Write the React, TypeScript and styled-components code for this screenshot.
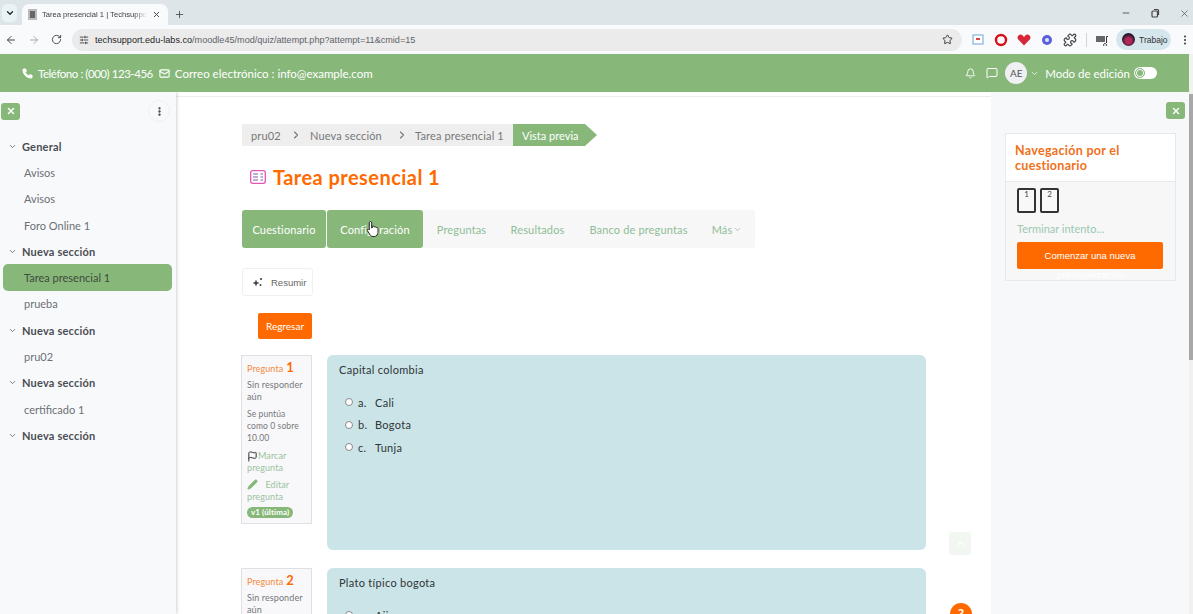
import React from "react";
import styled, { createGlobalStyle } from "styled-components";
import {
  ArrowLeft, ArrowRight, Bell, ChevronDown, ChevronRight, ChevronUp, EllipsisVertical, Flag, Mail,
  MessageSquare, Minus, Pencil, Phone, Plus, Puzzle, RotateCw, SlidersHorizontal, Star, X,
} from "lucide-react";

const FONT = `"Lato", "Open Sans", "Liberation Sans", sans-serif`;

const Global = createGlobalStyle`
  html, body { margin: 0; padding: 0; height: 100%; overflow: hidden; background: #fff; }
  body { font-family: ${FONT}; }
  #root { height: 100%; }
  * { box-sizing: border-box; }
`;

const Page = styled.div`display: flex; flex-direction: column; height: 614px; width: 1193px; overflow: hidden;`;

/* browser chrome */
const TabStrip = styled.div`height: 25px; background: #dee5e8; display: flex; align-items: flex-end; padding-left: 2px; position: relative; flex: none;`;
const TabMenu = styled.div`width: 15px; height: 18px; margin-bottom: 3px; border-radius: 5px; background: #e9f3f6; display: flex; align-items: center; justify-content: center; color: #222;`;
const Tab = styled.div`margin-left: 5px; width: 146px; height: 21px; background: #f9fafb; border-radius: 7px 7px 0 0; display: flex; align-items: center; padding-left: 6px; gap: 5px; color: #3c4043; font: 7.6px "Liberation Sans", sans-serif;`;
const Favicon = styled.svg`width: 9px; height: 11px; flex: none;`;
const TabTitle = styled.span`width: 105px; white-space: nowrap; overflow: hidden; flex: none; -webkit-mask-image: linear-gradient(90deg, #000 88%, transparent);`;
const TabAdd = styled.div`margin-left: 6px; margin-bottom: 5px; color: #333; display: flex;`;
const WinControls = styled.div`margin-left: auto; width: 72px; align-self: flex-start; padding: 8px 3px 0 0; display: flex; justify-content: space-between; color: #444;`;

const Toolbar = styled.div`height: 29px; background: #f9fafb; display: flex; align-items: center; padding-left: 5px; flex: none; color: #444;`;
const NavIcons = styled.div`display: flex; align-items: center; gap: 11px; width: 67px; flex: none;`;
const Omnibox = styled.div`width: 890px; flex: none; height: 22px; border-radius: 11px; background: #ebebeb; display: flex; align-items: center; padding: 0 9px 0 7px; gap: 6px; font: 9.1px "Liberation Sans", sans-serif; color: #5f6368;`;
const UrlHost = styled.span`color: #1f1f1f;`;
const Url = styled.span`flex: 1; white-space: nowrap;`;
const Exts = styled.div`display: flex; align-items: center; width: 133px; flex: none; padding-left: 9px; gap: 9px; & > * { flex: none; }`;
const ExtDivider = styled.div`width: 1px; height: 14px; background: #cdd8dc;`;
const MediaIcon = styled.svg`width: 14px; height: 12px; flex: none;`;
const Profile = styled.div`margin-left: 7px; width: 55px; height: 21px; border-radius: 11px; background: #d5e6ec; display: flex; align-items: center; padding-left: 6px; gap: 4px; font: 8.5px "Liberation Sans", sans-serif; color: #333; flex: none;`;
const ProfilePic = styled.div`width: 13px; height: 13px; border-radius: 50%; background: radial-gradient(circle at 50% 60%, #b0285a 0 30%, #2a1a2e 60%); flex: none;`;
const ToolDots = styled.div`margin-left: 8px; display: flex; color: #444; flex: none;`;

/* page */
const Viewport = styled.div`flex: 1; display: flex; min-height: 0;`;
const Site = styled.div`flex: 1; display: flex; flex-direction: column; min-width: 0;`;
const Scrollbar = styled.div`width: 4px; flex: none; background: #f1f1f1; display: flex; flex-direction: column;`;
const ScrollThumb = styled.div`height: 266px; margin-top: 40px; background: #a8a8a8; flex: none;`;

const TopBar = styled.header`height: 38px; flex: none; background: #87b87a; display: flex; align-items: center; padding-left: 22px; color: #fff; font-size: 11.5px; font-weight: 400;`;
const TopInfo = styled.span<{ $ls?: number }>`display: flex; align-items: center; margin-right: 6px; gap: 5px; white-space: nowrap; letter-spacing: ${(p) => p.$ls ?? 0}px;`;
const TopRight = styled.div`margin-left: auto; display: flex; align-items: center; padding-right: 32px;`;
const IconSlot = styled.span<{ $m: string }>`display: flex; margin: ${(p) => p.$m};`;
const Avatar = styled.div`width: 22px; height: 22px; border-radius: 50%; background: #eff0f3; color: #555; font-size: 10px; display: flex; align-items: center; justify-content: center;`;
const Toggle = styled.div`width: 23px; height: 12px; border-radius: 6px; background: #fff; margin-left: 4px; display: flex; align-items: center; padding-left: 1px;`;
const Knob = styled.div`width: 10px; height: 10px; border-radius: 50%; background: #87b87a; border: 1px solid #87b87a; box-shadow: inset 0 0 0 1px #fff;`;

const Main = styled.div`flex: 1; display: flex; min-height: 0; position: relative; overflow: hidden;`;

const LeftDrawer = styled.aside`width: 176px; flex: none; background: #f8f9fb; box-shadow: 1px 0 3px rgba(0,0,0,.18); padding: 8px 0 0 0; position: relative; z-index: 1;`;
const DrawerTop = styled.div`display: flex; justify-content: space-between; align-items: center; padding: 0 6px 0 1px; height: 22px; margin-bottom: 11px;`;
const CloseBtn = styled.div`width: 19px; height: 17px; border-radius: 3px; background: #87b87a; color: #fff; display: flex; align-items: center; justify-content: center;`;
const DotsBtn = styled.div`width: 22px; height: 22px; border-radius: 50%; border: 1px solid #f0f0f0; color: #333; display: flex; align-items: center; justify-content: center;`;
const Row = styled.div`height: 26.3px; display: flex; align-items: center;`;
const SectionRow = styled(Row)`padding-left: 8px; gap: 5px; font-weight: 700; font-size: 11px; letter-spacing: 0.2px; color: #4a4e54;`;
const ItemRow = styled(Row)<{ $active?: boolean }>`
  margin-left: 3px; width: 169px; padding-left: 21px; font-size: 11px; border-radius: 5px;
  color: ${(p) => (p.$active ? "#3f4a3d" : "#6c7075")};
  background: ${(p) => (p.$active ? "#87b87a" : "transparent")};
`;
const ChevronMuted = styled(ChevronDown)`color: #555; flex: none;`;

const Center = styled.main`flex: 1; min-width: 0; padding: 4px 0 0 0;`;
const CenterInner = styled.div`border-top: 1px solid #ececec; padding: 27px 0 0 66px;`;

const Crumbs = styled.nav`display: flex; height: 22px; align-items: center; font-size: 11px; letter-spacing: .15px; color: #777;`;
const CrumbItem = styled.span<{ $w: number; $pl: number }>`background: #eee; height: 100%; display: flex; align-items: center; width: ${(p) => p.$w}px; padding-left: ${(p) => p.$pl}px; white-space: nowrap; justify-content: space-between;`;
const CrumbLast = styled.span`background: #87b87a; color: #fff; height: 100%; width: 84px; padding-left: 9px; letter-spacing: 0; display: flex; align-items: center; clip-path: polygon(0 0, 72px 0, 84px 50%, 72px 100%, 0 100%);`;
const CrumbText = styled.span`margin-right: auto;`;

const TitleRow = styled.div`display: flex; align-items: center; margin: 19px 0 0 8px; height: 24px; gap: 7px;`;
const Title = styled.h1`margin: 0; font-size: 20px; font-weight: 700; letter-spacing: .45px; color: #ff6a00;`;

const Tabs = styled.nav`display: flex; width: 513px; height: 38px; margin-top: 21px; background: #f7f7f7; border-radius: 3px; font-size: 11px; letter-spacing: .15px;`;
const TabLink = styled.div<{ $active?: boolean; $w: number }>`
  width: ${(p) => p.$w}px; flex: none; display: flex; align-items: center; justify-content: center; gap: 1px; border-radius: 3px;
  color: ${(p) => (p.$active ? "#fff" : "#8fbd96")};
  background: ${(p) => (p.$active ? "#87b87a" : "transparent")};
  margin-right: ${(p) => (p.$active ? 1 : 0)}px;
`;
const Cursor = styled.svg`position: absolute; left: 366px; top: 128px; width: 14px; height: 18px; z-index: 3;`;

const ResumeBtn = styled.button`display: flex; align-items: center; gap: 7px; width: 71px; height: 28px; margin-top: 20px; padding: 0 0 0 9px; background: #fff; border: 1px solid #f0f0f0; border-radius: 3px; color: #666; font: 9.5px "Liberation Sans", sans-serif;`;
const BackBtn = styled.button`display: block; width: 54px; height: 26px; margin: 17px 0 0 16px; padding: 0; background: #ff6a00; border: none; border-radius: 2px; color: #fff; font: 10px ${FONT};`;

const Question = styled.section<{ $mt: number }>`display: grid; grid-template-columns: 71px 599px; column-gap: 15px; margin: ${(p) => p.$mt}px 0 0 -1px; align-items: start;`;
const Info = styled.div<{ $h: number }>`height: ${(p) => p.$h}px; background: #f8f8fb; border: 1px solid #dde1e4; padding: 4px 5px 0 5px; font-size: 9px; line-height: 12px; color: #777; letter-spacing: .1px;`;
const QNo = styled.div`color: #f58a3c; font-size: 9px; display: flex; align-items: baseline; gap: 3px; margin-bottom: 4px;`;
const QNum = styled.b`color: #ff6a00; font-size: 13px; line-height: 14px;`;
const InfoText = styled.div`margin-bottom: 5px;`;
const Grade = styled.div`font-size: 8.5px; margin-bottom: 6px;`;
const InfoLink = styled.div<{ $mb: number }>`color: #9cc2a0; margin-bottom: ${(p) => p.$mb}px;`;
const FlagIcon = styled(Flag)`vertical-align: -3px; color: #222;`;
const PenIcon = styled(Pencil)`vertical-align: -2px; color: #87b87a; fill: #87b87a; margin-right: 5px;`;
const Badge = styled.span`display: inline-block; height: 11px; line-height: 11px; padding: 0 4px; border-radius: 6px; background: #87b87a; color: #fff; font-size: 8px; font-weight: 700; white-space: nowrap;`;
const QBody = styled.div<{ $h: number }>`height: ${(p) => p.$h}px; background: #cbe4e7; border-radius: 6px; padding: 8px 12px; font-size: 11px; letter-spacing: .3px; color: #2f3438;`;
const QText = styled.div`height: 13px; line-height: 13px; margin-bottom: 15px;`;
const Option = styled.div`display: flex; align-items: center; height: 22.5px; padding-left: 6px;`;
const Radio = styled.span`width: 8px; height: 8px; border-radius: 50%; background: #fff; border: 1px solid #8a8a8a; margin-right: 5px; flex: none;`;
const OptLetter = styled.span`width: 17px; flex: none;`;

const ToTop = styled.div`position: absolute; left: 949px; bottom: 59px; width: 22px; height: 23px; border-radius: 3px; background: #f2f7f1; color: #fff; display: flex; align-items: center; justify-content: center; z-index: 2;`;
const Help = styled.div`position: absolute; left: 950px; bottom: -11px; width: 22px; height: 22px; border-radius: 50%; background: #ff6a00; color: #fff; font-size: 13px; font-weight: 700; display: flex; align-items: center; justify-content: center; z-index: 2;`;

const RightDrawer = styled.aside`width: 198px; flex: none; background: #f7f8fa; padding: 10px 4px 0 14px; display: flex; flex-direction: column;`;
const RightTop = styled.div`display: flex; justify-content: flex-end; height: 17px; margin-bottom: 14px;`;
const Block = styled.div`width: 171px; height: 148px; border: 1px solid #e8e9eb; background: #f7f7f8; position: relative;`;
const BlockHead = styled.div`height: 48px; background: #fff; border-bottom: 1px solid #e8e9eb; padding: 9px 9px 0; font-size: 12.5px; line-height: 15px; font-weight: 700; letter-spacing: .3px; color: #f0701a;`;
const NavBtns = styled.div`display: flex; gap: 4px; padding: 6px 0 0 11px;`;
const NavBtn = styled.div`width: 19px; height: 25px; border: 2px solid #333; border-radius: 2px; font-size: 8px; line-height: 9px; text-align: center; color: #444; background: #f8f8f8;`;
const Finish = styled.div`margin: 8px 0 0 11px; font-size: 11px; height: 15px; line-height: 15px; color: #9cc8b0;`;
const StartBtn = styled.button`display: block; width: 146px; height: 27px; margin: 6px 0 0 11px; padding: 0; background: #ff6a00; border: none; border-radius: 2px; color: #fff; font: 9.5px "Liberation Sans", sans-serif;`;
const Ghost = styled.div`text-align: center; font: 9.5px "Liberation Sans", sans-serif; color: #fff;`;

const Ext = ({ c, shape }: { c: string; shape: "o" | "h" | "c" | "b" }) => (
  <svg width="14" height="14" viewBox="0 0 14 14">
    {shape === "b" && <><rect x="2" y="2" width="10" height="9" fill="#fff" stroke={c} strokeWidth="1" /><rect x="5" y="5" width="4" height="2" fill="#d44" /></>}
    {shape === "o" && <><circle cx="7" cy="7" r="5" fill="none" stroke={c} strokeWidth="2.4" /><rect x="5.5" y="4" width="3" height="6" rx="1.5" fill="#fff" /></>}
    {shape === "h" && <path d="M7 12.5 1.5 6.8a3 3 0 0 1 0-4.2 3 3 0 0 1 4.2 0L7 4l1.3-1.4a3 3 0 0 1 4.2 0 3 3 0 0 1 0 4.2Z" fill={c} />}
    {shape === "c" && <><circle cx="7" cy="7" r="5" fill={c} /><circle cx="7" cy="7" r="2" fill="#dfe3ff" /></>}
  </svg>
);

const Sections: { kind: "s" | "i" | "a"; t: string }[] = [
  { kind: "s", t: "General" }, { kind: "i", t: "Avisos" }, { kind: "i", t: "Avisos" }, { kind: "i", t: "Foro Online 1" },
  { kind: "s", t: "Nueva sección" }, { kind: "a", t: "Tarea presencial 1" }, { kind: "i", t: "prueba" },
  { kind: "s", t: "Nueva sección" }, { kind: "i", t: "pru02" },
  { kind: "s", t: "Nueva sección" }, { kind: "i", t: "certificado 1" },
  { kind: "s", t: "Nueva sección" },
];

export default function App() {
  return (
    <Page>
      <Global />
      <TabStrip>
        <TabMenu><ChevronDown size={10} strokeWidth={3} /></TabMenu>
        <Tab>
          <Favicon viewBox="0 0 9 11"><rect width="9" height="11" fill="#bbb" /><rect x="2" y="2" width="5" height="7" fill="#666" /></Favicon>
          <TabTitle>Tarea presencial 1 | Techsupport</TabTitle>
          <X size={9} strokeWidth={2.4} />
        </Tab>
        <TabAdd><Plus size={11} strokeWidth={1.6} /></TabAdd>
        <WinControls>
          <Minus size={10} />
          <svg width="10" height="10" viewBox="0 0 10 10" fill="none" stroke="currentColor" strokeWidth="1.2"><rect x="2" y="3" width="5.5" height="6" rx="1" /><path d="M4 1.5h3.5a1 1 0 0 1 1 1V7" /></svg>
          <X size={11} strokeWidth={1.4} />
        </WinControls>
      </TabStrip>
      <Toolbar>
        <NavIcons>
          <ArrowLeft size={12} />
          <ArrowRight size={12} color="#aaa" />
          <RotateCw size={11} />
        </NavIcons>
        <Omnibox>
          <SlidersHorizontal size={10} color="#333" />
          <Url><UrlHost>techsupport.edu-labs.co</UrlHost>/moodle45/mod/quiz/attempt.php?attempt=11&amp;cmid=15</Url>
          <Star size={11} color="#333" strokeWidth={2} />
        </Omnibox>
        <Exts>
          <Ext c="#6fa3d8" shape="b" />
          <Ext c="#d8101a" shape="o" />
          <Ext c="#d8263a" shape="h" />
          <Ext c="#5a62d8" shape="c" />
          <Puzzle size={14} color="#444" />
          <ExtDivider />
        </Exts>
        <MediaIcon viewBox="0 0 14 12"><rect x="1" y="2" width="9" height="6" fill="#666" /><path d="M10 9.5a1.5 1.5 0 1 0 .1 0M11.5 9V2.5H13" stroke="#333" fill="none" /></MediaIcon>
        <Profile><ProfilePic /><span>Trabajo</span></Profile>
        <ToolDots><EllipsisVertical size={12} strokeWidth={2.4} /></ToolDots>
      </Toolbar>

      <Viewport>
        <Site>
          <TopBar>
            <TopInfo $ls={-0.45}><Phone size={11} fill="#fff" />Teléfono : (000) 123-456</TopInfo>
            <TopInfo><Mail size={11} strokeWidth={2.4} />Correo electrónico : info@example.com</TopInfo>
            <TopRight>
              <IconSlot $m="0 10px 0 0"><Bell size={11} /></IconSlot>
              <IconSlot $m="0 7px 0 0"><MessageSquare size={12} /></IconSlot>
              <Avatar>AE</Avatar>
              <IconSlot $m="0 6px 0 3px"><ChevronDown size={9} /></IconSlot>
              <span>Modo de edición</span>
              <Toggle><Knob /></Toggle>
            </TopRight>
          </TopBar>
          <Main>
            <LeftDrawer>
              <DrawerTop>
                <CloseBtn><X size={10} strokeWidth={3.4} /></CloseBtn>
                <DotsBtn><EllipsisVertical size={11} strokeWidth={3} /></DotsBtn>
              </DrawerTop>
              {Sections.map((s, i) =>
                s.kind === "s" ? (
                  <SectionRow key={i}><ChevronMuted size={9} />{s.t}</SectionRow>
                ) : (
                  <ItemRow key={i} $active={s.kind === "a"}>{s.t}</ItemRow>
                ),
              )}
            </LeftDrawer>
            <Center>
              <CenterInner>
                <Crumbs>
                  <CrumbItem $w={60} $pl={9}><CrumbText>pru02</CrumbText><ChevronRight size={12} strokeWidth={2.2} /></CrumbItem>
                  <CrumbItem $w={106} $pl={8}><CrumbText>Nueva sección</CrumbText><ChevronRight size={12} strokeWidth={2.2} /></CrumbItem>
                  <CrumbItem $w={105} $pl={7}><CrumbText>Tarea presencial 1</CrumbText></CrumbItem>
                  <CrumbLast>Vista previa</CrumbLast>
                </Crumbs>
                <TitleRow>
                  <svg width="16" height="14" viewBox="0 0 16 14" fill="none">
                    <rect x=".7" y=".7" width="14.6" height="12.6" rx="2" stroke="#e455b8" strokeWidth="1.3" />
                    <path d="M3 4h5M3 7h5M3 10h5M10.5 4h2.5M10.5 7h2.5M10.5 10h2.5" stroke="#7d5aa8" strokeWidth="1.1" />
                  </svg>
                  <Title>Tarea presencial 1</Title>
                </TitleRow>
                <Tabs>
                  <TabLink $active $w={84}>Cuestionario</TabLink>
                  <TabLink $active $w={96}>Configuración</TabLink>
                  <TabLink $w={75}>Preguntas</TabLink>
                  <TabLink $w={77}>Resultados</TabLink>
                  <TabLink $w={125}>Banco de preguntas</TabLink>
                  <TabLink $w={52}>Más<ChevronDown size={9} /></TabLink>
                </Tabs>
                <ResumeBtn>
                  <svg width="12" height="10" viewBox="0 0 12 10" fill="#444"><path d="M4 2.5 5 5l2.5 1L5 7 4 9.5 3 7 .5 6 3 5Z" /><circle cx="9" cy="2" r="1.1" /><circle cx="8.5" cy="8" r="1" /></svg>
                  Resumir
                </ResumeBtn>
                <BackBtn>Regresar</BackBtn>
                <Question $mt={16}>
                  <Info $h={169}>
                    <QNo>Pregunta <QNum>1</QNum></QNo>
                    <InfoText>Sin responder aún</InfoText>
                    <Grade>Se puntúa como 0 sobre 10.00</Grade>
                    <InfoLink $mb={5}><FlagIcon size={11} />Marcar pregunta</InfoLink>
                    <InfoLink $mb={3}><PenIcon size={11} /> Editar pregunta</InfoLink>
                    <Badge>v1 (última)</Badge>
                  </Info>
                  <QBody $h={195}>
                    <QText>Capital colombia</QText>
                    <Option><Radio /><OptLetter>a.</OptLetter>Cali</Option>
                    <Option><Radio /><OptLetter>b.</OptLetter>Bogota</Option>
                    <Option><Radio /><OptLetter>c.</OptLetter>Tunja</Option>
                  </QBody>
                </Question>
                <Question $mt={18}>
                  <Info $h={169}>
                    <QNo>Pregunta <QNum>2</QNum></QNo>
                    <InfoText>Sin responder aún</InfoText>
                  </Info>
                  <QBody $h={195}>
                    <QText>Plato típico bogota</QText>
                    <Option><Radio /><OptLetter>a.</OptLetter>Ajiaco</Option>
                  </QBody>
                </Question>
              </CenterInner>
            </Center>
            <RightDrawer>
              <RightTop><CloseBtn><X size={10} strokeWidth={3.4} /></CloseBtn></RightTop>
              <Block>
                <BlockHead>Navegación por el cuestionario</BlockHead>
                <NavBtns><NavBtn>1</NavBtn><NavBtn>2</NavBtn></NavBtns>
                <Finish>Terminar intento...</Finish>
                <StartBtn>Comenzar una nueva</StartBtn>
                <Ghost>previsualización</Ghost>
              </Block>
            </RightDrawer>
            <ToTop><ChevronUp size={13} strokeWidth={2.5} /></ToTop>
            <Help>?</Help>
            <Cursor viewBox="0 0 14 18">
              <path d="M4.5 1.5c.8 0 1.2.6 1.2 1.3V8l.6-.2V6.5c.9-.6 1.8-.3 2 .5.9-.5 1.8-.2 2 .6.9-.3 1.7.2 1.7 1.1v3.5c0 2.3-1.5 4.3-3.8 4.3H7c-1.3 0-2.2-.6-3-1.7L1.3 10.4c-.5-.8.5-1.8 1.3-1.2l.7.7V2.8c0-.7.5-1.3 1.2-1.3Z" fill="#fff" stroke="#222" strokeWidth="1" />
            </Cursor>
          </Main>
        </Site>
        <Scrollbar><ScrollThumb /></Scrollbar>
      </Viewport>
    </Page>
  );
}
